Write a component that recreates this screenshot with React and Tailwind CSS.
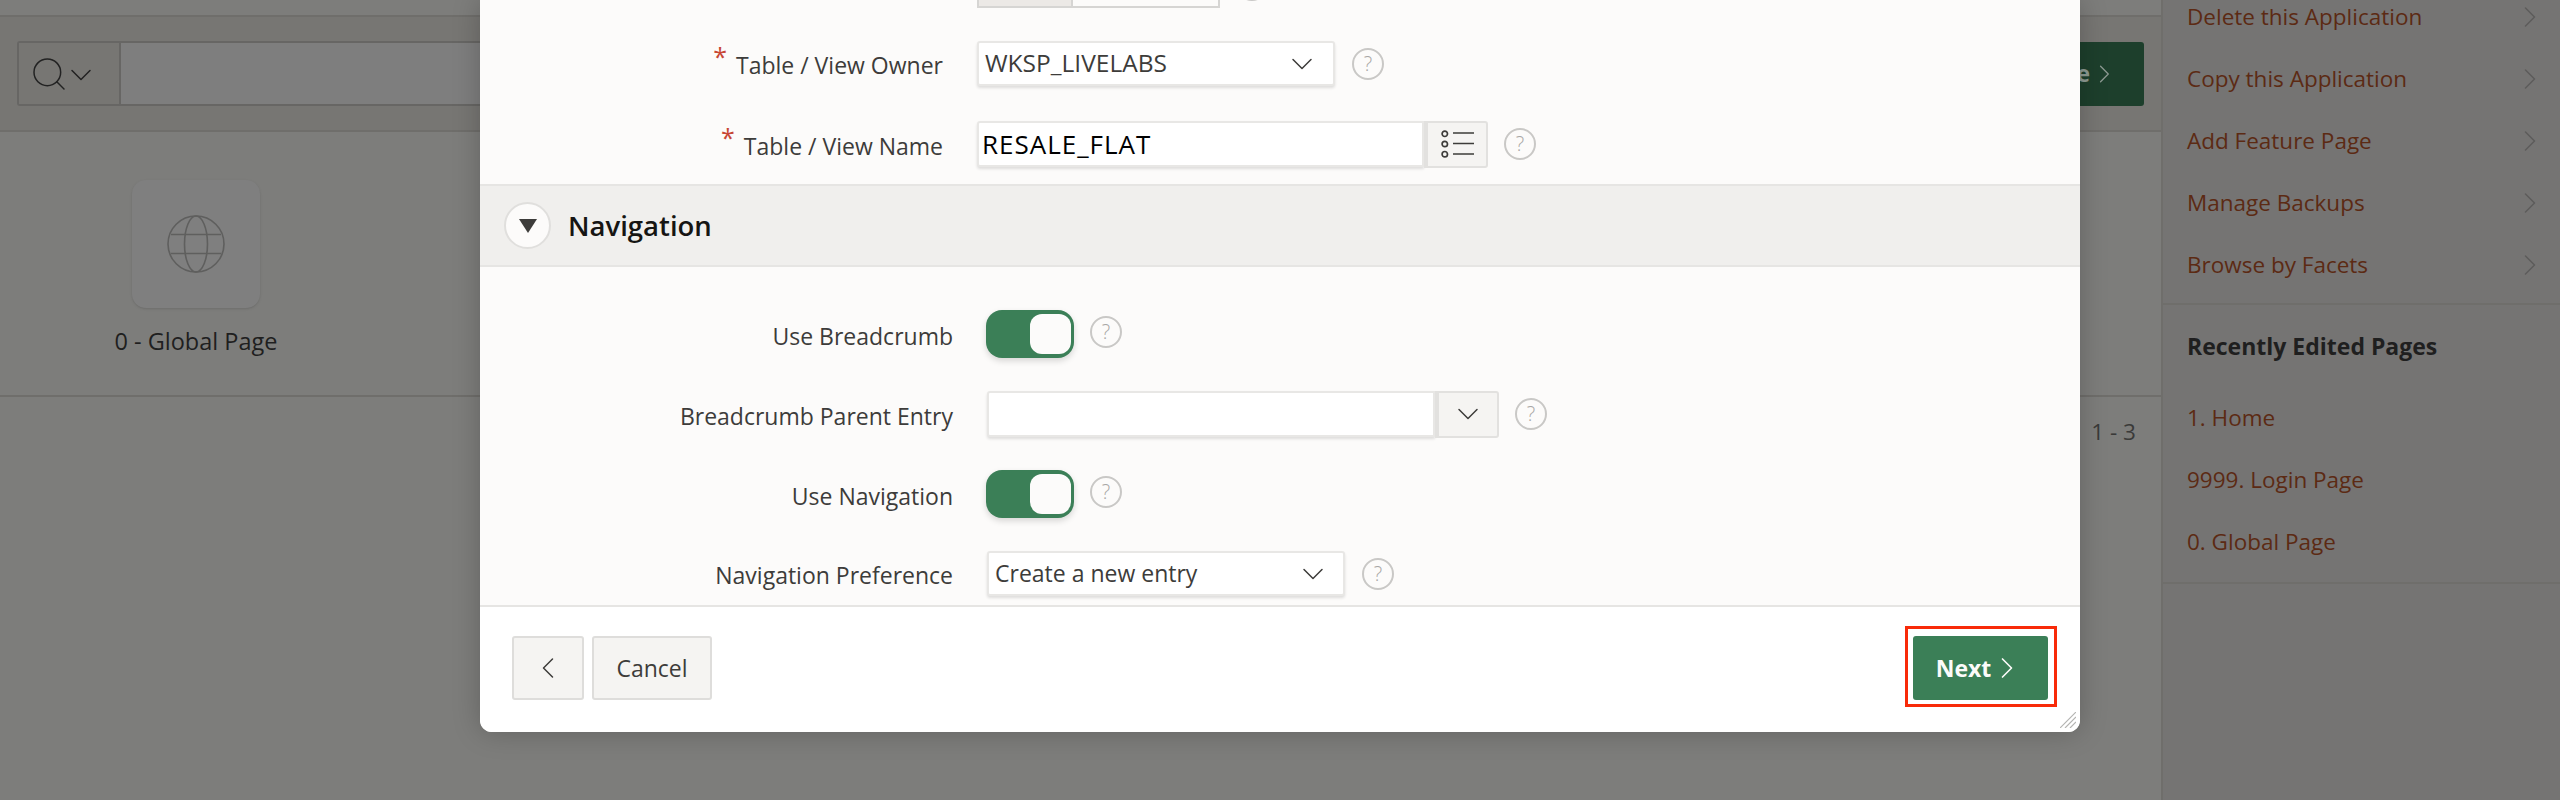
import React from 'react';
import { ChevronDown, ChevronRight, ChevronLeft, Search } from 'lucide-react';

const font = { fontFamily: '"Open Sans", "Noto Sans", sans-serif' };

const sideLinks = ['Delete this Application', 'Copy this Application', 'Add Feature Page', 'Manage Backups', 'Browse by Facets'];
const recentPages = ['1. Home', '9999. Login Page', '0. Global Page'];

const Help = ({ className = '' }) => (
  <span className={`flex h-[32px] w-[32px] shrink-0 items-center justify-center rounded-full border-2 border-[#c9c8c6] text-[20px] font-light text-[#a8a7a5] ${className}`}>?</span>
);

const Toggle = () => (
  <div className="flex h-[48px] w-[88px] shrink-0 items-center justify-end rounded-[16px] bg-[#3b7f57] pr-[3px] shadow-[0_3px_6px_rgba(0,0,0,0.15)]">
    <div className="h-[40px] w-[41px] rounded-[12px] bg-[#fcfbfa]" />
  </div>
);

const Label = ({ children, required, w = 'w-[473px]' }) => (
  <div className={`${w} flex shrink-0 justify-end pt-[3px] text-[23px] leading-[34px] text-[#3d3c3a]`}>
    {required && <span className="mr-[9px] -mt-[4px] text-[25px] leading-[25px] text-[#c74634]">*</span>}
    {children}
  </div>
);

const inputBox = 'flex items-center bg-white rounded-[3px] border-2 border-[#e8e7e5] shadow-[0_2px_3px_rgba(0,0,0,0.12)]';
const addonBtn = 'flex h-[47px] w-[64px] shrink-0 items-center justify-center rounded-r-[3px] border-2 border-l-4 border-[#e2e1df] bg-[#f5f4f2] text-[#3d3c3a]';

export default function App() {
  return (
    <div className="relative h-[800px] w-[2560px] overflow-hidden bg-[#7d7d7b]" style={font}>
      {/* page behind the dialog */}
      <div className="flex h-full">
        <div className="flex-1">
          <div className="h-[17px] border-b-2 border-[#6f6e6b]" />
          <div className="flex h-[115px] items-center justify-between border-b-2 border-[#6f6e6b] bg-[#777673] pl-[17px] pr-[17px]">
            <div className="flex h-[65px] flex-1 rounded-[3px] border-2 border-[#676664] bg-[#7e7e7e]">
              <div className="flex w-[102px] items-center border-r-2 border-[#676664] bg-[#777673] pl-[10px] text-[#222]">
                <Search size={40} strokeWidth={0.9} />
                <ChevronDown size={36} strokeWidth={1} className="-ml-[6px] mt-[2px]" />
              </div>
            </div>
            <div className="ml-[16px] flex h-[64px] w-[130px] items-center justify-end rounded-[3px] bg-[#1d3f2c] pr-[24px] text-[23px] font-bold text-[#8d9a92]">
              Create
              <ChevronRight size={36} strokeWidth={1} className="ml-[-1px]" />
            </div>
          </div>
          <div className="h-[265px] border-b-2 border-[#6f6e6b] pl-[112px] pt-[48px]">
            <div className="flex w-[168px] flex-col items-center">
              <div className="flex h-[128px] w-[128px] items-center justify-center rounded-[14px] bg-[#7f7f7f] shadow-sm">
                <svg width="58" height="58" viewBox="0 0 58 58" fill="none" stroke="#5f5f5e" strokeWidth="1.6">
                  <circle cx="29" cy="29" r="28" />
                  <ellipse cx="29" cy="29" rx="11.5" ry="28" />
                  <path d="M4 19.5h50M4 38.5h50" />
                </svg>
              </div>
              <div className="mt-[16px] whitespace-nowrap text-[23.5px] leading-[35px] text-[#1f1f1f]">0 - Global Page</div>
            </div>
          </div>
          <div className="pr-[25px] pt-[18px] text-right text-[22.5px] leading-[33px] text-[#3a3a39]">1 - 3</div>
        </div>
        <div className="w-[399px] shrink-0 border-l-2 border-[#6f6e6b] bg-[#757473] text-[22.5px]">
          <div className="border-b-2 border-[#6f6e6b] pb-[7px]">
            {sideLinks.map((t) => (
              <div key={t} className="flex h-[62px] items-center justify-between pl-[24px] pr-[12px] text-[#5c2a13] first:-mt-[14px]">
                {t}
                <ChevronRight size={36} strokeWidth={1} className="text-[#5d5c5b]" />
              </div>
            ))}
          </div>
          <div className="border-b-2 border-[#6f6e6b] pb-[9px] pl-[24px] pt-[24px]">
            <div className="mb-[24px] text-[23px] font-bold leading-[34px] text-[#1f1f1f]">Recently Edited Pages</div>
            {recentPages.map((t) => (
              <div key={t} className="flex h-[62px] items-center text-[#5c2a13]">{t}</div>
            ))}
          </div>
        </div>
      </div>

      {/* dialog */}
      <div className="absolute left-[480px] top-0 flex h-[732px] w-[1600px] flex-col overflow-hidden rounded-b-[12px] bg-[#fcfbfa] shadow-[0_0_28px_rgba(0,0,0,0.22)]">
        <div className="flex h-[184px] shrink-0 flex-col">
          <div className="ml-[497px] flex h-[8px]">
            <div className="w-[94px] border-b-2 border-l-2 border-[#d6d5d3] bg-[#ece9e6]" />
            <div className="w-[149px] border-x-2 border-b-2 border-[#d6d5d3]" />
            <Help className="ml-[16px] -mt-[31px]" />
          </div>
          <div className="mt-[33px] flex h-[45px] items-center">
            <Label required w="w-[463px]">Table / View Owner</Label>
            <div className={`${inputBox} ml-[34px] h-[45px] w-[358px] justify-between pl-[6px] pr-[13px] text-[24.5px] text-[#3d3c3a]`}>
              WKSP_LIVELABS
              <ChevronDown size={36} strokeWidth={1} />
            </div>
            <Help className="ml-[17px]" />
          </div>
          <div className="mt-[35px] flex h-[46px] items-center">
            <Label required w="w-[463px]">Table / View Name</Label>
            <div className={`${inputBox} ml-[34px] h-[46px] w-[447px] rounded-r-none pl-[3px] text-[26px] tracking-[1px] text-black`}>RESALE_FLAT</div>
            <div className={addonBtn}>
              <svg width="33" height="28" viewBox="0 0 33 28" fill="none" stroke="#3d3c3a" strokeWidth="1.7">
                <circle cx="3.8" cy="3.8" r="2.7" />
                <circle cx="3.8" cy="14" r="2.7" />
                <circle cx="3.8" cy="24.2" r="2.7" />
                <path d="M12 3h21M12 13.5h21M12 24h21" />
              </svg>
            </div>
            <Help className="ml-[16px]" />
          </div>
        </div>
        <div className="flex h-[83px] shrink-0 items-center border-y-2 border-[#e6e5e3] bg-[#f0efed] pl-[24px]">
          <div className="flex h-[47px] w-[47px] items-center justify-center rounded-full border-2 border-[#e0dfdd] bg-[#fcfbfa]">
            <svg width="18" height="14" viewBox="0 0 18 14"><path d="M0 0h18L9 14z" fill="#3d3c3a" /></svg>
          </div>
          <div className="ml-[17px] text-[27.5px] font-semibold text-[#161513]">Navigation</div>
        </div>
        <div className="h-[338px] shrink-0 overflow-hidden">
          <div className="mt-[43px] flex h-[48px] items-center">
            <Label>Use Breadcrumb</Label>
            <div className="ml-[33px]"><Toggle /></div>
            <Help className="ml-[16px] -mt-[4px]" />
          </div>
          <div className="mt-[33px] flex h-[46px] items-center">
            <Label>Breadcrumb Parent Entry</Label>
            <div className={`${inputBox} ml-[34px] h-[46px] w-[448px] rounded-r-none`} />
            <div className={addonBtn}>
              <ChevronDown size={36} strokeWidth={1} />
            </div>
            <Help className="ml-[16px]" />
          </div>
          <div className="mt-[33px] flex h-[48px] items-center">
            <Label>Use Navigation</Label>
            <div className="ml-[33px]"><Toggle /></div>
            <Help className="ml-[16px] -mt-[4px]" />
          </div>
          <div className="mt-[33px] flex h-[45px] items-center">
            <Label>Navigation Preference</Label>
            <div className={`${inputBox} ml-[34px] h-[45px] w-[358px] justify-between pl-[6px] pr-[12px] text-[23px] text-[#3d3c3a]`}>
              Create a new entry
              <ChevronDown size={36} strokeWidth={1} />
            </div>
            <Help className="ml-[17px]" />
          </div>
        </div>
        <div className="relative flex flex-1 items-start justify-between border-t-2 border-[#e6e5e3] bg-white px-[32px] pt-[29px]">
          <div className="flex gap-[8px] text-[#3d3c3a]">
            <div className="flex h-[64px] w-[72px] items-center justify-center rounded-[3px] border-2 border-[#dedddb] bg-[#f5f4f2]">
              <ChevronLeft size={36} strokeWidth={1} />
            </div>
            <div className="flex h-[64px] w-[120px] items-center justify-center rounded-[3px] border-2 border-[#dedddb] bg-[#f5f4f2] text-[23px]">Cancel</div>
          </div>
          <div className="flex h-[64px] w-[135px] items-center justify-center rounded-[3px] bg-[#3b7f57] text-[23px] font-bold text-[#fcfbfa]">
            Next
            <ChevronRight size={36} strokeWidth={1.1} className="-ml-[2px]" />
          </div>
          <svg className="absolute bottom-[4px] right-[4px]" width="16" height="16" viewBox="0 0 16 16" stroke="#b5b5b3" strokeWidth="1.2">
            <path d="M16 0L0 16M16 5L5 16M16 10L10 16" />
          </svg>
          {/* red highlight drawn over the screenshot */}
          <div className="absolute right-[23px] top-[19px] h-[81px] w-[152px] border-[3px] border-[#f82a09]" />
        </div>
      </div>
    </div>
  );
}
